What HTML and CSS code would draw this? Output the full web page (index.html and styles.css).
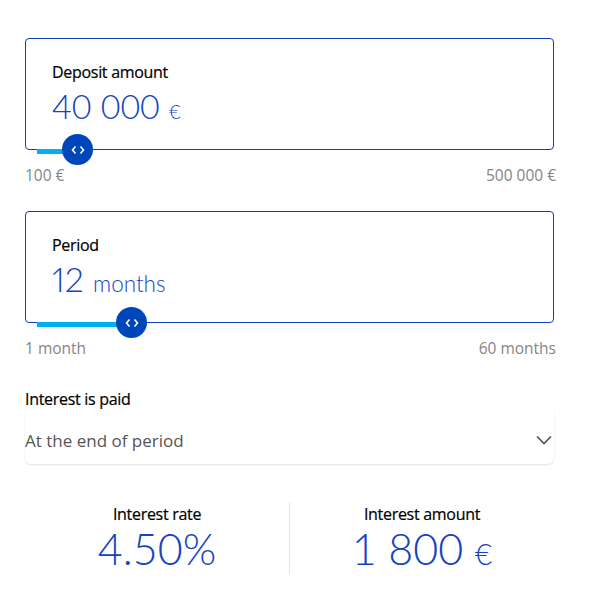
FILE: index.html
```html
<!DOCTYPE html>
<html lang="en">
<head>
    <meta charset="UTF-8">
    <meta name="viewport" content="width=device-width, initial-scale=1.0">
    <title>Deposit calculator</title>
    <link rel="stylesheet" href="styles.css">
</head>
<body>

    <div class="calc">
        <div class="campo">
            <div class="campo-label">Deposit amount</div>
            <div class="campo-valor">40 000 <span class="unidade">€</span></div>
        </div>
        <div class="slider">
            <div class="slider-fill" style="width: 40px;"></div>
            <div class="slider-thumb" style="left: 37px;">
                <svg width="14" height="10" viewBox="0 0 14 10"><path d="M4.5 1.5 1.5 5l3 3.5M9.5 1.5l3 3.5-3 3.5" fill="none" stroke="#fff" stroke-width="1.6"/></svg>
            </div>
        </div>
        <div class="limites">
            <span>100 €</span>
            <span>500 000 €</span>
        </div>

        <div class="campo">
            <div class="campo-label">Period</div>
            <div class="campo-valor campo-valor-curto">12 <span class="unidade unidade-texto">months</span></div>
        </div>
        <div class="slider">
            <div class="slider-fill" style="width: 94px;"></div>
            <div class="slider-thumb" style="left: 91px;">
                <svg width="14" height="10" viewBox="0 0 14 10"><path d="M4.5 1.5 1.5 5l3 3.5M9.5 1.5l3 3.5-3 3.5" fill="none" stroke="#fff" stroke-width="1.6"/></svg>
            </div>
        </div>
        <div class="limites">
            <span>1 month</span>
            <span>60 months</span>
        </div>

        <div class="grupo-select">
            <div class="select-label">Interest is paid</div>
            <div class="select">
                <span>At the end of period</span>
                <svg width="16" height="10" viewBox="0 0 16 10"><path d="M1 1.5l7 7 7-7" fill="none" stroke="#555" stroke-width="1.7"/></svg>
            </div>
        </div>

        <div class="resultado">
            <div class="resultado-col">
                <div class="resultado-label">Interest rate</div>
                <div class="resultado-valor">4.50%</div>
            </div>
            <div class="resultado-col">
                <div class="resultado-label">Interest amount</div>
                <div class="resultado-valor">1 800 <span class="unidade-grande">€</span></div>
            </div>
        </div>
    </div>

</body>
</html>
```

FILE: styles.css
```css
body {
    margin: 0;
    background: #ffffff;
    font-family: "Open Sans", "Liberation Sans", sans-serif;
}

.calc {
    width: 529px;
    margin-left: 25px;
    padding-top: 38px;
}

.campo {
    box-sizing: border-box;
    height: 112px;
    border: 1px solid #0b3fbd;
    border-radius: 4px;
    padding: 22px 0 0 26px;
}

.campo-label {
    font-size: 16px;
    font-weight: 500;
    color: #000;
    line-height: 22px;
    letter-spacing: -0.3px;
    -webkit-text-stroke: 0.2px #000;
}

.campo-valor {
    font-family: Lato, "Open Sans", sans-serif;
    font-weight: 300;
    font-size: 34px;
    line-height: 46px;
    color: #1443c4;
}

.campo-valor-curto {
    font-variant-numeric: proportional-nums;
}

.unidade {
    font-size: 20px;
}

.unidade-texto {
    font-size: 22.5px;
}

.slider {
    position: relative;
    height: 0;
}

.slider-fill {
    position: absolute;
    left: 12px;
    top: -1px;
    height: 5px;
    background: #00b0f0;
}

.slider-thumb {
    position: absolute;
    top: -16px;
    width: 31px;
    height: 31px;
    border-radius: 50%;
    background: #0046bb;
    display: flex;
    align-items: center;
    justify-content: center;
}

.limites {
    display: flex;
    justify-content: space-between;
    margin-right: -2px;
    padding-top: 14px;
    font-size: 15.5px;
    line-height: 22px;
    color: #858585;
    margin-bottom: 25px;
}

.grupo-select {
    margin-top: 29px;
}

.select-label {
    font-size: 16px;
    font-weight: 500;
    line-height: 22px;
    color: #000;
    letter-spacing: -0.3px;
    -webkit-text-stroke: 0.2px #000;
}

.select {
    box-sizing: border-box;
    display: flex;
    justify-content: space-between;
    align-items: center;
    height: 54px;
    padding: 6px 2px 0 0;
    font-size: 17px;
    color: #555;
    border-radius: 0 0 6px 6px;
    box-shadow: 0 1px 2px rgba(0, 0, 0, 0.12);
}

.resultado {
    display: flex;
    margin-top: 38px;
}

.resultado-col {
    flex: 1;
    text-align: center;
    padding-top: 2px;
}

.resultado-col + .resultado-col {
    border-left: 1px solid #e4e4e4;
}

.resultado-label {
    font-size: 16px;
    font-weight: 500;
    line-height: 20px;
    color: #000;
    letter-spacing: -0.3px;
    -webkit-text-stroke: 0.2px #000;
}

.resultado-valor {
    font-family: Lato, "Open Sans", sans-serif;
    font-weight: 300;
    font-size: 43px;
    line-height: 52px;
    margin-top: -1px;
    margin-bottom: -5px;
    color: #1443c4;
}

.unidade-grande {
    font-size: 30px;
}
```
